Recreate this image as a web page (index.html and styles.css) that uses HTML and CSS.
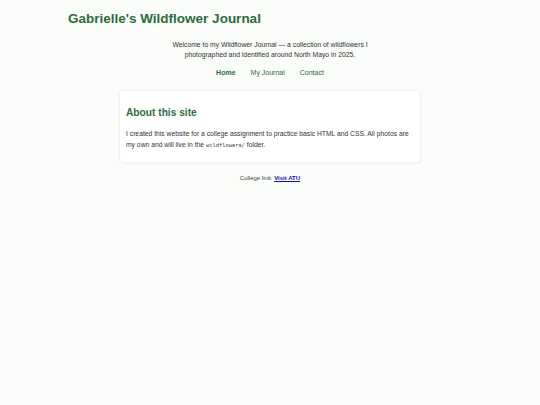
FILE: index.html
```html
<!DOCTYPE html>
<html lang="en">
<head>
<meta charset="utf-8">
<title>Gabrielle's Wildflower Journal</title>
<link rel="stylesheet" href="styles.css">
</head>
<body>
<header class="site-header">
  <h1 class="site-title">Gabrielle's Wildflower Journal</h1>
  <p class="intro">Welcome to my Wildflower Journal — a collection of wildflowers I photographed and identified around North Mayo in 2025.</p>
  <nav class="nav">
    <a class="nav-link active" href="#">Home</a>
    <a class="nav-link" href="#">My Journal</a>
    <a class="nav-link" href="#">Contact</a>
  </nav>
</header>
<main class="main">
  <section class="card">
    <h2 class="card-title">About this site</h2>
    <p class="card-text">I created this website for a college assignment to practice basic HTML and CSS. All photos are my own and will live in the <code class="code">wildflowers/</code> folder.</p>
  </section>
</main>
<footer class="footer">
  <p class="footer-text">College link: <a class="footer-link" href="#">Visit ATU</a></p>
</footer>
</body>
</html>
```
FILE: styles.css
```css
html, body {
  margin: 0;
  padding: 0;
}
body {
  background: #f9fcf8;
  font-family: "Liberation Sans", Arial, sans-serif;
  color: #333;
  width: 540px;
  min-height: 405px;
}
.site-header {
  padding: 10px 0 0 68px;
  display: flex;
  flex-direction: column;
}
.site-title {
  margin: 0;
  font-size: 13.5px;
  line-height: 18px;
  font-weight: bold;
  color: #2f6b3e;
}
.intro {
  margin: 12px 0 0 -68px;
  width: 540px;
  text-align: center;
  font-size: 6.8px;
  line-height: 10px;
  color: #333;
  padding: 0 168px;
  box-sizing: border-box;
}
.nav {
  margin: 8px 0 0 -68px;
  width: 540px;
  display: flex;
  justify-content: center;
  gap: 15px;
  font-size: 7px;
  line-height: 10px;
}
.nav-link {
  color: #2f6b3e;
  text-decoration: none;
}
.nav-link.active {
  font-weight: bold;
}
.main {
  display: flex;
  justify-content: center;
  margin-top: 12px;
}
.card {
  width: 302px;
  box-sizing: border-box;
  background: #fff;
  border: 1px solid #eef1ec;
  border-radius: 4px;
  box-shadow: 0 1px 3px rgba(0,0,0,0.04);
  padding: 15px 6px 12px 6px;
}
.card-title {
  margin: 0;
  font-size: 10.2px;
  line-height: 14px;
  color: #2f6b3e;
}
.card-text {
  margin: 8px 0 0 0;
  font-size: 6.75px;
  line-height: 11px;
  color: #333;
}
.code {
  font-family: "DejaVu Sans Mono", monospace;
  font-size: 5.4px;
  line-height: 0;
}
.footer {
  text-align: center;
  margin-top: 10px;
}
.footer-text {
  margin: 0;
  font-size: 6px;
  line-height: 10px;
  color: #444;
}
.footer-link {
  color: #1a0dab;
  font-weight: bold;
}
```
